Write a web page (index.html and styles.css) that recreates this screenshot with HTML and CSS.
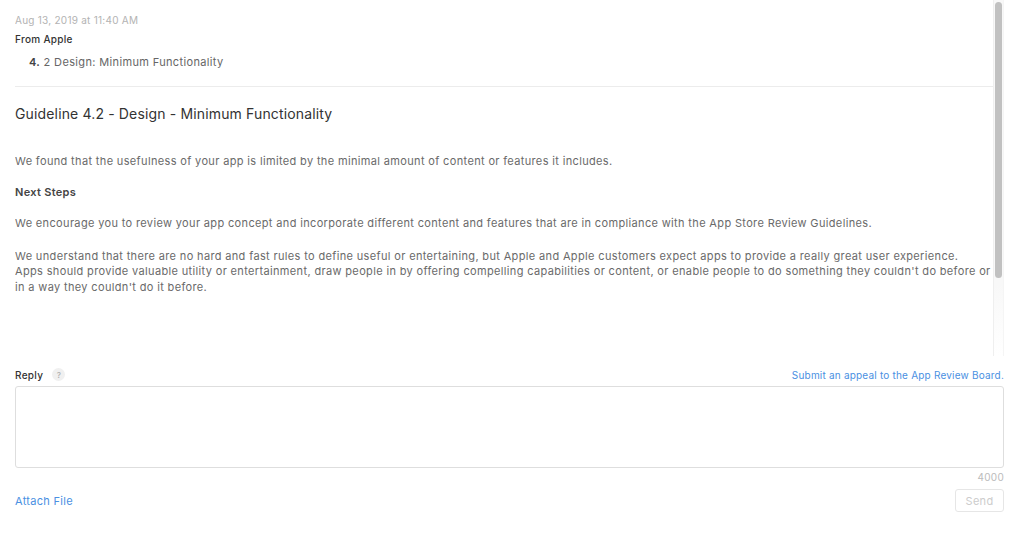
FILE: index.html
```html
<!DOCTYPE html>
<html>
<head>
<meta charset="utf-8">
<link rel="stylesheet" href="styles.css">
</head>
<body>
<div class="page">
  <div class="thread">
    <div class="thread-content">
      <div class="meta">
        <div class="date">Aug 13, 2019 at 11:40 AM</div>
        <div class="from">From Apple</div>
        <div class="subject"><b>4.</b> 2 Design: Minimum Functionality</div>
      </div>
      <div class="message">
        <h2 class="guideline">Guideline 4.2 - Design - Minimum Functionality</h2>
        <p class="text first">We found that the usefulness of your app is limited by the minimal amount of content or features it includes.</p>
        <p class="text strong">Next Steps</p>
        <p class="text mid">We encourage you to review your app concept and incorporate different content and features that are in compliance with the App Store Review Guidelines.</p>
        <p class="text last">We understand that there are no hard and fast rules to define useful or entertaining, but Apple and Apple customers expect apps to provide a really great user experience.<br>Apps should provide valuable utility or entertainment, draw people in by offering compelling capabilities or content, or enable people to do something they couldn't do before or in a way they couldn't do it before.</p>
      </div>
    </div>
    <div class="scrollbar"><div class="thumb"></div></div>
  </div>

  <div class="reply">
    <div class="reply-head">
      <div class="label">Reply <span class="help">?</span></div>
      <a class="link small">Submit an appeal to the App Review Board.</a>
    </div>
    <div class="box"></div>
    <div class="count">4000</div>
    <div class="actions">
      <a class="link">Attach File</a>
      <span class="send">Send</span>
    </div>
  </div>
</div>
</body>
</html>
```
FILE: styles.css
```css
* { box-sizing: border-box; }
html, body { margin: 0; padding: 0; background: #fff; }
body {
  font-family: Inter, "Helvetica Neue", "Liberation Sans", sans-serif;
  color: #666;
}
.page {
  padding: 0 20px 0 15px;
}
.thread {
  height: 356px;
  display: flex;
}
.thread-content {
  flex: 1;
  min-width: 0;
  overflow: hidden;
}
.scrollbar {
  width: 11px;
  flex: none;
  background: linear-gradient(#f8f8f8 80%, #fff);
  border-left: 1px solid #efefef;
  border-right: 1px solid #f5f5f5;
  padding: 2px 1px 0;
}
.thumb {
  height: 276px;
  background: #c1c1c1;
  border-radius: 4px;
}
.meta {
  padding-top: 13px;
  padding-bottom: 16px;
  border-bottom: 1px solid #ececec;
}
.date { font-size: 10px; color: #b3b3b3; line-height: 14px; letter-spacing: 0.25px; }
.from { font-size: 10px; color: #333; font-weight: 500; line-height: 14px; margin-top: 5px; letter-spacing: 0.3px; }
.subject { font-size: 11px; color: #666; line-height: 16px; margin-top: 8px; padding-left: 14px; letter-spacing: 0.35px; }
.subject b { color: #444; font-weight: 600; }
.guideline {
  margin: 17px 0 0;
  font-size: 14px;
  font-weight: 400;
  color: #333;
  line-height: 20px;
  letter-spacing: 0.15px;
}
.text {
  margin: 15px 0 0;
  font-size: 11px;
  line-height: 15.5px;
  color: #6a6a6a;
  letter-spacing: 0.35px;
}
.text.first { margin-top: 30px; }
.text.strong { font-weight: 600; color: #444; letter-spacing: 0.3px; }
.text.mid { margin-top: 16px; }
.text.last { margin-top: 17px; }
.reply { padding-top: 11px; }
.reply-head {
  display: flex;
  justify-content: space-between;
  align-items: center;
  height: 15px;
}
.label { font-size: 10px; color: #333; font-weight: 500; display: flex; align-items: center; gap: 9px; letter-spacing: 0.3px; }
.help {
  width: 13px; height: 13px; border-radius: 50%;
  background: #f0f0f0; color: #b0b0b0; font-size: 8px;
  display: inline-flex; align-items: center; justify-content: center;
  letter-spacing: 0;
}
.link { color: #4a90e2; font-size: 11px; cursor: pointer; letter-spacing: 0.3px; }
.link.small { font-size: 10px; letter-spacing: 0.2px; }
.box {
  margin-top: 4px;
  height: 82px;
  border: 1px solid #dedede;
  border-radius: 3px;
}
.count { text-align: right; font-size: 10px; color: #bbb; line-height: 14px; margin-top: 2px; letter-spacing: 0.3px; }
.actions {
  display: flex;
  justify-content: space-between;
  align-items: center;
  margin-top: 5px;
}
.send {
  width: 49px; height: 23px;
  border: 1px solid #e6e6e6;
  border-radius: 3px;
  color: #ccc;
  font-size: 11px;
  letter-spacing: 0.3px;
  display: flex; align-items: center; justify-content: center;
}
```
